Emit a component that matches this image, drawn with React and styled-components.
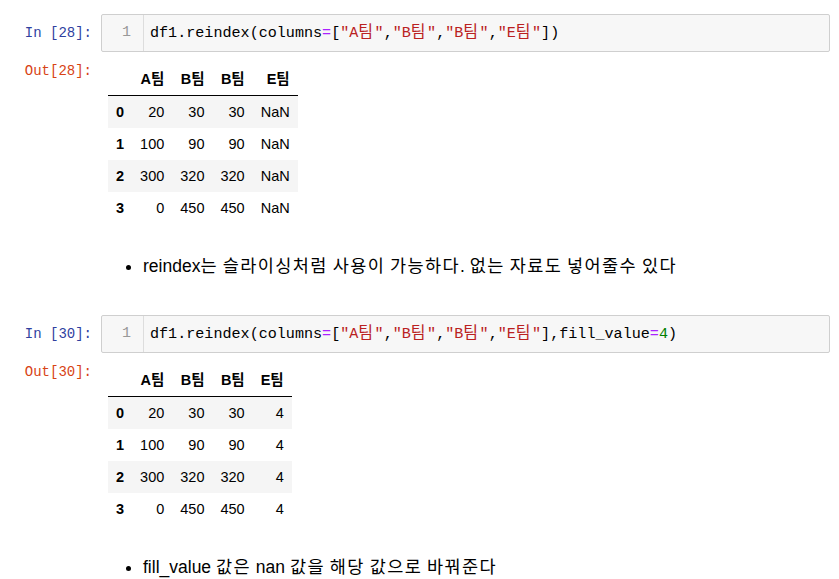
import React from 'react';
import styled, { createGlobalStyle } from 'styled-components';

const GlobalStyle = createGlobalStyle`
  html, body {
    margin: 0;
    padding: 0;
    background: #fff;
  }
  body {
    font-family: "Liberation Sans", "Noto Sans CJK KR", sans-serif;
    color: #000;
  }
`;

const Notebook = styled.div`
  width: 839px;
  padding: 14px 9px 0 0;
  box-sizing: border-box;
  display: flex;
  flex-direction: column;
`;

const Cell = styled.div`
  display: flex;
  flex-direction: column;
  gap: 10px;
`;

const Row = styled.div`
  display: flex;
  align-items: flex-start;
`;

const Prompt = styled.div`
  flex: 0 0 101px;
  box-sizing: border-box;
  padding-right: 9px;
  padding-top: ${(p) => (p.out ? '0' : '10px')};
  text-align: right;
  font-family: "Liberation Mono", "DejaVu Sans Mono", monospace;
  font-size: 14px;
  line-height: 18px;
  color: ${(p) => (p.out ? '#D84315' : '#303F9F')};
`;

const Editor = styled.div`
  flex: 1;
  display: flex;
  height: 38px;
  box-sizing: border-box;
  border: 1px solid #cfcfcf;
  border-radius: 2px;
  background: #f7f7f7;
`;

const Gutter = styled.div`
  width: 42px;
  box-sizing: border-box;
  border-right: 1px solid #ddd;
  padding-right: 12px;
  text-align: right;
  font-family: "Liberation Mono", monospace;
  font-size: 15px;
  line-height: 36px;
  color: #999;
`;

const Code = styled.pre`
  margin: 0;
  padding-left: 6px;
  font-family: "Liberation Mono", "Noto Sans CJK KR", monospace;
  font-size: 15.1px;
  line-height: 36px;
  color: #000;
`;

const Str = styled.span`
  color: #BA2121;
`;

const CodeHangul = styled.span`
  font-size: 16px;
  letter-spacing: 1.5px;
`;

const Op = styled.span`
  color: #AA22FF;
`;

const Num = styled.span`
  color: #008000;
`;

const Output = styled.div`
  padding-left: 7px;
`;

const Table = styled.table`
  border-collapse: collapse;
  border-spacing: 0;
  font-family: "Liberation Sans", "Noto Sans CJK KR", sans-serif;
  font-size: 14.5px;
  color: #000;

  th, td {
    padding: 8px 8px;
    line-height: 16px;
    text-align: right;
    white-space: nowrap;
  }
  thead th {
    font-weight: bold;
    border-bottom: 1px solid #000;
    padding-top: 9px;
  }
  tbody th {
    font-weight: bold;
  }
  tbody tr:nth-child(odd) {
    background: #f5f5f5;
  }
`;

const Markdown = styled.div`
  padding: 30px 0 37px 101px;
`;

const List = styled.ul`
  margin: 0;
  padding-left: 42px;
  font-family: "Liberation Sans", "Noto Sans CJK KR", sans-serif;
  font-size: 17.5px;
  line-height: 24px;
`;

const Hangul = styled.span`
  letter-spacing: 1.4px;
`;

// Hangul runs get a little extra tracking, the way the notebook font draws them
const Prose = ({ children }) =>
  children.split(/([\uac00-\ud7a3]+)/).map((part, i) =>
    /[\uac00-\ud7a3]/.test(part) ? <Hangul key={i}>{part}</Hangul> : part
  );

const columns = ['A팀', 'B팀', 'B팀', 'E팀'];
const rows = [
  ['0', '20', '30', '30'],
  ['1', '100', '90', '90'],
  ['2', '300', '320', '320'],
  ['3', '0', '450', '450'],
];

const Frame = ({ last }) => (
  <Table>
    <thead>
      <tr>
        <th></th>
        {columns.map((c, i) => (
          <th key={i}>{c}</th>
        ))}
      </tr>
    </thead>
    <tbody>
      {rows.map((r) => (
        <tr key={r[0]}>
          <th>{r[0]}</th>
          <td>{r[1]}</td>
          <td>{r[2]}</td>
          <td>{r[3]}</td>
          <td>{last}</td>
        </tr>
      ))}
    </tbody>
  </Table>
);

const Team = ({ letter }) => (
  <Str>
    "{letter}
    <CodeHangul>팀</CodeHangul>"
  </Str>
);

const ColumnsArg = () => (
  <>
    df1.reindex(columns<Op>=</Op>[<Team letter="A" />,<Team letter="B" />,
    <Team letter="B" />,<Team letter="E" />]
  </>
);

const App = () => (
  <>
    <GlobalStyle />
    <Notebook>
      <Cell>
        <Row>
          <Prompt>In [28]:</Prompt>
          <Editor>
            <Gutter>1</Gutter>
            <Code>
              <ColumnsArg />)
            </Code>
          </Editor>
        </Row>
        <Row>
          <Prompt out>Out[28]:</Prompt>
          <Output>
            <Frame last="NaN" />
          </Output>
        </Row>
      </Cell>
      <Markdown>
        <List>
          <li>
            <Prose>reindex는 슬라이싱처럼 사용이 가능하다. 없는 자료도 넣어줄수 있다</Prose>
          </li>
        </List>
      </Markdown>
      <Cell>
        <Row>
          <Prompt>In [30]:</Prompt>
          <Editor>
            <Gutter>1</Gutter>
            <Code>
              <ColumnsArg />,fill_value<Op>=</Op><Num>4</Num>)
            </Code>
          </Editor>
        </Row>
        <Row>
          <Prompt out>Out[30]:</Prompt>
          <Output>
            <Frame last="4" />
          </Output>
        </Row>
      </Cell>
      <Markdown>
        <List>
          <li>
            <Prose>fill_value 값은 nan 값을 해당 값으로 바꿔준다</Prose>
          </li>
        </List>
      </Markdown>
    </Notebook>
  </>
);

export default App;
